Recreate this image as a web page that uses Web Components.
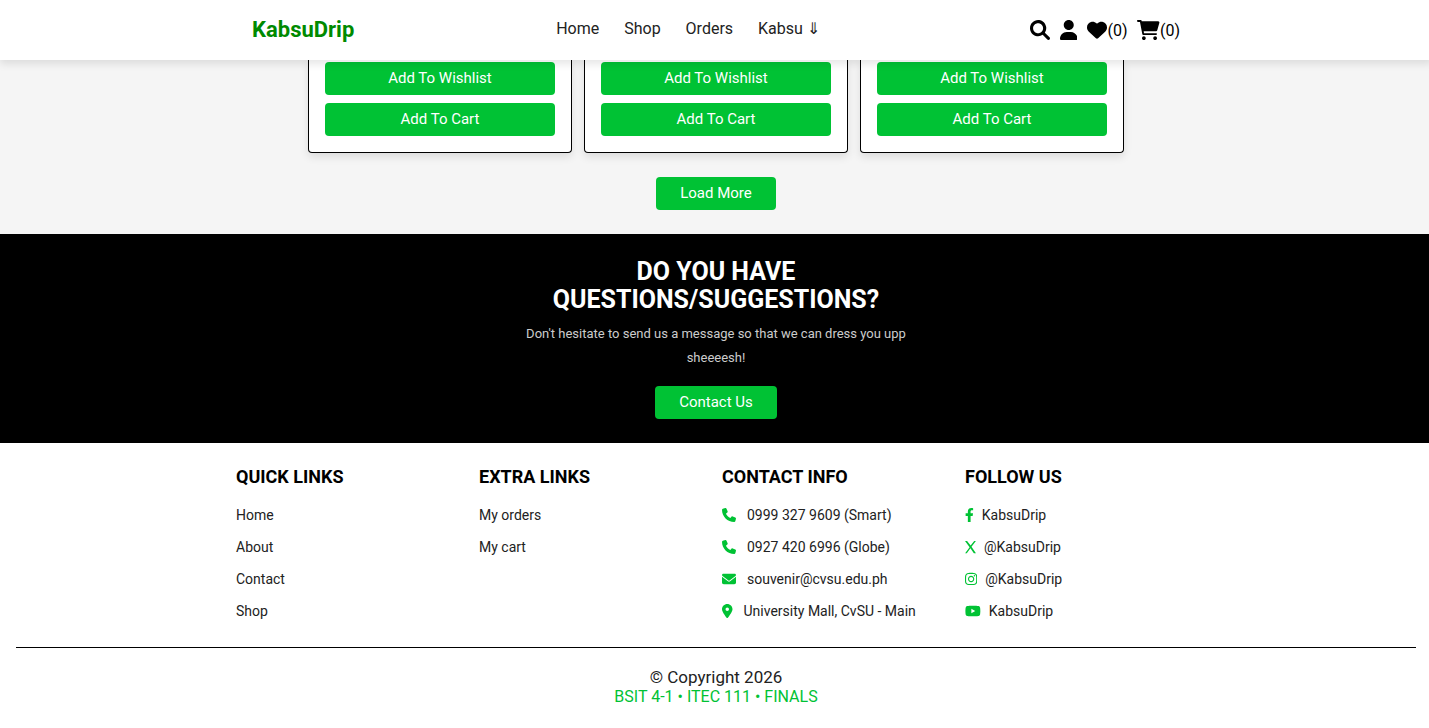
<!DOCTYPE html>
<html lang="en">
<head>
<meta charset="utf-8">
<title>KabsuDrip</title>
<style>
html { overflow-x: clip; }
body { margin: 0 -3px 0 0; background: #fff; color: #222; font-family: Roboto, "Liberation Sans", sans-serif; font-size: 16px; line-height: 19px; --green: #00c234; }
</style>
</head>
<body>
<site-header></site-header>
<product-list></product-list>
<contact-banner></contact-banner>
<site-footer></site-footer>
<script>
const ICONS = {
  search: [512, 'M500.3 443.7l-119.7-119.7c27.22-40.41 40.65-90.9 33.46-144.7C401.8 87.79 326.8 13.32 235.2 1.723C99.01-15.51-15.51 99.01 1.724 235.2c11.6 91.64 86.08 166.7 177.6 178.9c53.8 7.189 104.3-6.236 144.7-33.46l119.7 119.7c15.62 15.62 40.95 15.62 56.57 0C515.9 484.7 515.9 459.3 500.3 443.7zM79.1 208c0-70.58 57.42-128 128-128s128 57.42 128 128c0 70.58-57.42 128-128 128S79.1 278.6 79.1 208z'],
  user: [448, 'M224 256c70.7 0 128-57.31 128-128s-57.3-128-128-128C153.3 0 96 57.31 96 128S153.3 256 224 256zM274.7 304H173.3C77.61 304 0 381.6 0 477.3c0 19.14 15.52 34.67 34.66 34.67h378.7C432.5 512 448 496.5 448 477.3C448 381.6 370.4 304 274.7 304z'],
  heart: [512, 'M47.6 300.4L228.3 469.1c7.5 7 17.4 10.9 27.7 10.9s20.2-3.9 27.7-10.9L464.4 300.4c30.4-28.3 47.6-68 47.6-109.5v-5.8c0-69.9-50.5-129.5-119.4-141C347 36.5 300.6 51.4 268 84L256 96 244 84c-32.6-32.6-79-47.5-124.6-39.9C50.5 55.6 0 115.2 0 185.1v5.8c0 41.5 17.2 81.2 47.6 109.5z'],
  cart: [576, 'M96 0C107.5 0 117.4 8.19 119.6 19.51L121.1 32H541.8C562.1 32 578.3 52.25 572.6 72.66L518.6 264.7C514.7 278.5 502.1 288 487.8 288H170.7L179.9 336H488C501.3 336 512 346.7 512 360C512 373.3 501.3 384 488 384H159.1C148.5 384 138.6 375.8 136.4 364.5L76.14 48H24C10.75 48 0 37.25 0 24C0 10.75 10.75 0 24 0H96zM128 464C128 437.5 149.5 416 176 416C202.5 416 224 437.5 224 464C224 490.5 202.5 512 176 512C149.5 512 128 490.5 128 464zM512 464C512 490.5 490.5 512 464 512C437.5 512 416 490.5 416 464C416 437.5 437.5 416 464 416C490.5 416 512 437.5 512 464z'],
  phone: [512, 'M164.9 24.6c-7.7-18.6-28-28.5-47.4-23.2l-88 24C12.1 30.2 0 46 0 64C0 311.4 200.6 512 448 512c18 0 33.8-12.1 38.6-29.5l24-88c5.3-19.4-4.6-39.7-23.2-47.4l-96-40c-16.3-6.8-35.2-2.1-46.3 11.6L304.7 368C234.3 334.7 177.3 277.7 144 207.3L193.3 167c13.7-11.2 18.4-30 11.6-46.3l-40-96z'],
  mail: [512, 'M48 64C21.5 64 0 85.5 0 112c0 15.1 7.1 29.3 19.2 38.4L236.8 313.6c11.4 8.5 27 8.5 38.4 0L492.8 150.4c12.1-9.1 19.2-23.3 19.2-38.4c0-26.5-21.5-48-48-48H48zM0 176V384c0 35.3 28.7 64 64 64H448c35.3 0 64-28.7 64-64V176L294.4 339.2c-22.8 17.1-54 17.1-76.8 0L0 176z'],
  pin: [384, 'M215.7 499.2C267 435 384 279.4 384 192C384 86 298 0 192 0S0 86 0 192c0 87.4 117 243 168.3 307.2c12.3 15.3 35.1 15.3 47.4 0zM192 128a64 64 0 1 1 0 128 64 64 0 1 1 0-128z'],
  facebook: [320, 'M279.14 288l14.22-92.66h-88.91v-60.13c0-25.35 12.42-50.06 52.24-50.06h40.42V6.26S260.43 0 225.36 0c-73.22 0-121.08 44.38-121.08 124.72v70.62H22.89V288h81.39v224h100.17V288z'],
  x: [400, 'M0 32H76L206 204L336 32H398L238 244L400 480H324L198 304L66 480H4L168 262Z'],
  instagram: [448, 'M224.1 141c-63.6 0-114.9 51.3-114.9 114.9s51.3 114.9 114.9 114.9S339 319.5 339 255.9 287.7 141 224.1 141zm0 189.6c-41.1 0-74.7-33.5-74.7-74.7s33.5-74.7 74.7-74.7 74.7 33.5 74.7 74.7-33.6 74.7-74.7 74.7zm146.4-194.3c0 14.9-12 26.8-26.8 26.8-14.9 0-26.8-12-26.8-26.8s12-26.8 26.8-26.8 26.8 12 26.8 26.8zm76.1 27.2c-1.7-35.9-9.9-67.7-36.2-93.9-26.2-26.2-58-34.4-93.9-36.2-37-2.1-147.9-2.1-184.9 0-35.8 1.7-67.6 9.9-93.9 36.1s-34.4 58-36.2 93.9c-2.1 37-2.1 147.9 0 184.9 1.7 35.9 9.9 67.7 36.2 93.9s58 34.4 93.9 36.2c37 2.1 147.9 2.1 184.9 0 35.9-1.7 67.7-9.9 93.9-36.2 26.2-26.2 34.4-58 36.2-93.9 2.1-37 2.1-147.8 0-184.8zM398.8 388c-7.8 19.6-22.9 34.7-42.6 42.6-29.5 11.7-99.5 9-132.1 9s-102.7 2.6-132.1-9c-19.6-7.8-34.7-22.9-42.6-42.6-11.7-29.5-9-99.5-9-132.1s-2.6-102.7 9-132.1c7.8-19.6 22.9-34.7 42.6-42.6 29.5-11.7 99.5-9 132.1-9s102.7-2.6 132.1 9c19.6 7.8 34.7 22.9 42.6 42.6 11.7 29.5 9 99.5 9 132.1s2.7 102.7-9 132.1z'],
  youtube: [576, 'M549.655 124.083c-6.281-23.65-24.787-42.276-48.284-48.597C458.781 64 288 64 288 64S117.22 64 74.629 75.486c-23.497 6.322-42.003 24.947-48.284 48.597-11.412 42.867-11.412 132.305-11.412 132.305s0 89.438 11.412 132.305c6.281 23.65 24.787 41.5 48.284 47.821C117.22 448 288 448 288 448s170.78 0 213.371-11.486c23.497-6.321 42.003-24.171 48.284-47.821 11.412-42.867 11.412-132.305 11.412-132.305s0-89.438-11.412-132.305zm-317.51 213.508V175.185l142.739 81.205-142.739 81.201z'],
};

function define(name, html) {
  const template = document.createElement('template');
  template.innerHTML = html;
  customElements.define(name, class extends HTMLElement {
    constructor() {
      super();
      this.attachShadow({ mode: 'open' }).append(template.content.cloneNode(true));
    }
  });
}

customElements.define('ui-icon', class extends HTMLElement {
  constructor() {
    super();
    this.attachShadow({ mode: 'open' });
  }
  connectedCallback() {
    const [width, path] = ICONS[this.getAttribute('name')];
    this.shadowRoot.innerHTML = `<style>
      :host { display: block; flex: none; }
      svg { display: block; height: var(--icon-size, 14px); fill: currentColor; }
    </style><svg viewBox="0 0 ${width} 512" aria-hidden="true"><path d="${path}"/></svg>`;
  }
});

define('ui-button', `<style>
  :host { display: block; }
  button { display: block; width: 100%; border: 0; border-radius: 4px; padding: 8px 24px; background: var(--green); color: #fff; font: 400 15px/17px Roboto, "Liberation Sans", sans-serif; cursor: pointer; }
</style><button type="button"><slot></slot></button>`);

define('product-card', `<style>
  :host { display: flex; flex-direction: column; gap: 8px; padding: 2px 16px 16px; background: #fff; border: 1px solid #000; border-top: 0; border-radius: 0 0 4px 4px; box-shadow: 0 4px 8px rgba(0, 0, 0, .1); }
</style><ui-button>Add To Wishlist</ui-button><ui-button>Add To Cart</ui-button>`);

define('product-list', `<style>
  :host { display: flex; flex-direction: column; align-items: center; gap: 24px; padding-bottom: 24px; background: #f5f5f5; }
  .grid { display: grid; grid-template-columns: repeat(3, 1fr); gap: 12px; width: 100%; max-width: 816px; }
</style><div class="grid"><product-card></product-card><product-card></product-card><product-card></product-card></div><ui-button>Load More</ui-button>`);

define('site-header', `<style>
  :host { display: block; position: sticky; top: 0; z-index: 1; background: #fff; box-shadow: 0 4px 8px rgba(0, 0, 0, .1); }
  .bar { display: grid; grid-template-columns: 1fr auto 1fr; align-items: center; box-sizing: border-box; max-width: 960px; height: 60px; margin: 0 auto; padding: 0 16px; }
  a { color: inherit; text-decoration: none; }
  .logo { color: #008a00; font-size: 22px; font-weight: 700; line-height: 24px; }
  nav { display: flex; gap: 25px; padding: 0 56px 4px 0; }
  .tools { display: flex; justify-content: flex-end; gap: 10px; color: #000; --icon-size: 20px; }
  .tools a { display: flex; align-items: center; }
</style><div class="bar">
  <a class="logo" href="#">KabsuDrip</a>
  <nav><a href="#">Home</a><a href="#">Shop</a><a href="#">Orders</a><a href="#">Kabsu ⇓</a></nav>
  <div class="tools">
    <a href="#" aria-label="Search"><ui-icon name="search"></ui-icon></a>
    <a href="#" aria-label="Account"><ui-icon name="user"></ui-icon></a>
    <a href="#"><ui-icon name="heart"></ui-icon><span>(0)</span></a>
    <a href="#"><ui-icon name="cart"></ui-icon><span>(0)</span></a>
  </div>
</div>`);

define('contact-banner', `<style>
  :host { display: flex; flex-direction: column; align-items: center; padding: 24px 0; background: #000; color: #fff; text-align: center; }
  h2 { max-width: 400px; margin: 0 0 8px; font-size: 25px; line-height: 28px; }
  p { max-width: 400px; margin: 0 0 16px; color: #ccc; font-size: 13px; line-height: 24px; }
</style><h2>DO YOU HAVE QUESTIONS/SUGGESTIONS?</h2>
<p>Don't hesitate to send us a message so that we can dress you upp sheeeesh!</p>
<ui-button>Contact Us</ui-button>`);

define('link-column', `<style>
  :host { display: block; }
  h3 { margin: 0 0 12px; color: #000; font-size: 18px; line-height: 20px; }
  slot:not([name])::slotted(*) { display: flex; align-items: center; gap: var(--link-gap, 8px); height: 32px; color: inherit; font-size: 14px; text-decoration: none; }
</style><h3><slot name="title"></slot></h3><slot></slot>`);

define('site-footer', `<style>
  :host { display: block; padding: 24px 16px; }
  .columns { display: grid; grid-template-columns: repeat(4, 1fr); gap: 12px; max-width: 960px; margin: 0 auto 20px; }
  ui-icon { color: var(--green); }
  .contact { --link-gap: 11px; }
  .copy { border-top: 1px solid #000; padding-top: 20px; font-size: 17px; text-align: center; }
  .copy span { display: block; color: var(--green); font-size: 16px; }
</style><div class="columns">
  <link-column><span slot="title">QUICK LINKS</span><a href="#">Home</a><a href="#">About</a><a href="#">Contact</a><a href="#">Shop</a></link-column>
  <link-column><span slot="title">EXTRA LINKS</span><a href="#">My orders</a><a href="#">My cart</a></link-column>
  <link-column class="contact"><span slot="title">CONTACT INFO</span><a href="#"><ui-icon name="phone"></ui-icon>0999 327 9609 (Smart)</a><a href="#"><ui-icon name="phone"></ui-icon>0927 420 6996 (Globe)</a><a href="#"><ui-icon name="mail"></ui-icon>souvenir@cvsu.edu.ph</a><a href="#"><ui-icon name="pin"></ui-icon>University Mall, CvSU - Main</a></link-column>
  <link-column><span slot="title">FOLLOW US</span><a href="#"><ui-icon name="facebook"></ui-icon>KabsuDrip</a><a href="#"><ui-icon name="x"></ui-icon>@KabsuDrip</a><a href="#"><ui-icon name="instagram"></ui-icon>@KabsuDrip</a><a href="#"><ui-icon name="youtube"></ui-icon>KabsuDrip</a></link-column>
</div>
<div class="copy">© Copyright 2026<span>BSIT 4-1 • ITEC 111 • FINALS</span></div>`);
</script>
</body>
</html>
